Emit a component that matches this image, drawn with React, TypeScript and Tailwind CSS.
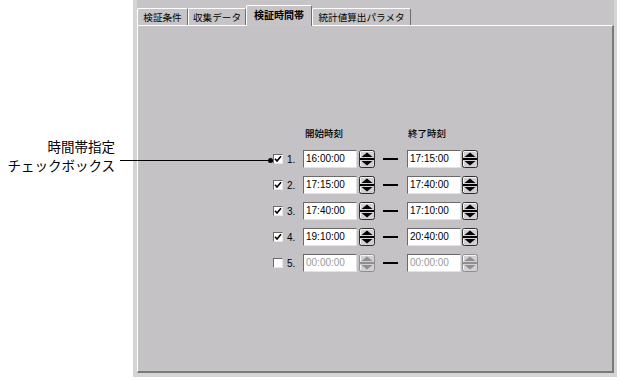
import React from 'react';

const ROWS = [
  { n: 1, on: true, from: '16:00:00', to: '17:15:00' },
  { n: 2, on: true, from: '17:15:00', to: '17:40:00' },
  { n: 3, on: true, from: '17:40:00', to: '17:10:00' },
  { n: 4, on: true, from: '19:10:00', to: '20:40:00' },
  { n: 5, on: false, from: '00:00:00', to: '00:00:00' },
];

const TABS = [
  { label: '検証条件', w: 'w-[51px]' },
  { label: '収集データ', w: 'w-[58px]' },
  { label: '検証時間帯', w: 'w-[66px]', active: true },
  { label: '統計値算出パラメタ', w: 'w-[99px]' },
];

// up/down arrow pair beside each time box
const Spinner = ({ disabled }: { disabled?: boolean }) => {
  const c = disabled ? '#8f8e90' : '#000';
  return (
    <svg width="16" height="18" viewBox="0 0 16 18" className="shrink-0">
      <rect x="0.5" y="0.5" width="15" height="17" rx="2" fill="#d2d0d2" stroke={disabled ? '#8f8e90' : '#2e2e2e'} />
      <path d="M1.5 7.5 V2 Q1.5 1.5 2 1.5 H14" stroke="#f4f4f4" fill="none" />
      <path d="M1.5 16 V11" stroke="#f4f4f4" fill="none" />
      <rect x="1" y="8" width="14" height="2" fill={c} />
      <path d="M8 2.5 L13.5 7 H2.5 Z" fill={c} />
      <path d="M8 15.5 L13.5 11 H2.5 Z" fill={c} />
    </svg>
  );
};

const TimeBox = ({ value, disabled }: { value: string; disabled?: boolean }) => (
  <div
    className={[
      'w-[54px] h-[18px] bg-white border border-t-[#6a6a6a] border-l-[#6a6a6a] border-r-[#e2e2e2] border-b-[#e2e2e2] pl-[2px] text-[10px] leading-[16px] shrink-0',
      disabled ? 'text-[#9a9a9a]' : 'text-black',
    ].join(' ')}
  >
    {value}
  </div>
);

const Check = ({ on }: { on: boolean }) => (
  <div className="w-[10px] h-[10px] bg-white border border-t-[#6a6a6a] border-l-[#6a6a6a] border-r-[#e6e6e6] border-b-[#e6e6e6] shrink-0 flex items-center justify-center">
    {on && (
      <svg width="8" height="8" viewBox="0 0 8 8">
        <path d="M1 3.8 L3 6 L7 1.2" stroke="#000" strokeWidth="1.6" fill="none" />
      </svg>
    )}
  </div>
);

export default function App() {
  return (
    <div className="relative flex w-[620px] h-[381px] bg-white text-black font-['Liberation_Sans','Noto_Sans_CJK_JP',sans-serif]">
      {/* callout */}
      <div className="w-[133px] shrink-0 pt-[137px] pr-[18px] text-right text-[13.5px] font-['Noto_Sans_CJK_JP',sans-serif]">
        <div className="h-[19px] leading-[19px]">時間帯指定</div>
        <div className="h-[19px] leading-[19px]">チェックボックス</div>
      </div>
      <div className="absolute left-[120px] top-[160px] w-[150px] h-px bg-black" />
      <div className="absolute left-[268px] top-[158px] w-[5px] h-[5px] rounded-full bg-black" />

      {/* dialog frame */}
      <div className="w-[484px] h-[377px] shrink-0 flex flex-col bg-[#c6c4c6] border-l-4 border-b-4 border-r-[3px] border-[#d6d5d6]">
        <div className="h-[25px] flex items-end">
          {TABS.map((t) => (
            <div
              key={t.label}
              className={[
                t.w,
                'flex items-center justify-center border-t border-l border-t-white border-l-white border-r border-r-[#6e6e6e] rounded-t-[2px] bg-[#c6c4c6] font-[\'Noto_Sans_CJK_JP\',sans-serif] whitespace-nowrap',
                t.active
                  ? 'h-[21px] -mb-px relative z-10 text-[10px] font-bold pb-[3px]'
                  : 'h-[17px] text-[9.6px]',
              ].join(' ')}
            >
              {t.label}
            </div>
          ))}
        </div>

        <div className="flex-1 bg-[#c4c2c5] border-t border-l border-white border-r-2 border-b-2 border-r-[#7a7a7a] border-b-[#7a7a7a] pl-[135px] pt-[100px]">
          <div className="flex h-[14px] items-center text-[9.5px] font-medium font-['Noto_Sans_CJK_JP',sans-serif]">
            <div className="w-[30px]" />
            <div className="w-[72px] pl-[2px]">開始時刻</div>
            <div className="w-[32px]" />
            <div className="pl-[1px]">終了時刻</div>
          </div>
          <div className="mt-[6px] flex flex-col">
            {ROWS.map((r) => (
              <div key={r.n} className="flex items-center h-[26px]">
                <Check on={r.on} />
                <div className="w-[20px] pl-[4px] text-[10px]">{r.n}.</div>
                <TimeBox value={r.from} disabled={!r.on} />
                <div className="ml-[2px]">
                  <Spinner disabled={!r.on} />
                </div>
                <div className="ml-[8px] w-[15px] h-[2px] bg-black" />
                <div className="ml-[9px]">
                  <TimeBox value={r.to} disabled={!r.on} />
                </div>
                <div className="ml-[1px]">
                  <Spinner disabled={!r.on} />
                </div>
              </div>
            ))}
          </div>
        </div>
      </div>
    </div>
  );
}
